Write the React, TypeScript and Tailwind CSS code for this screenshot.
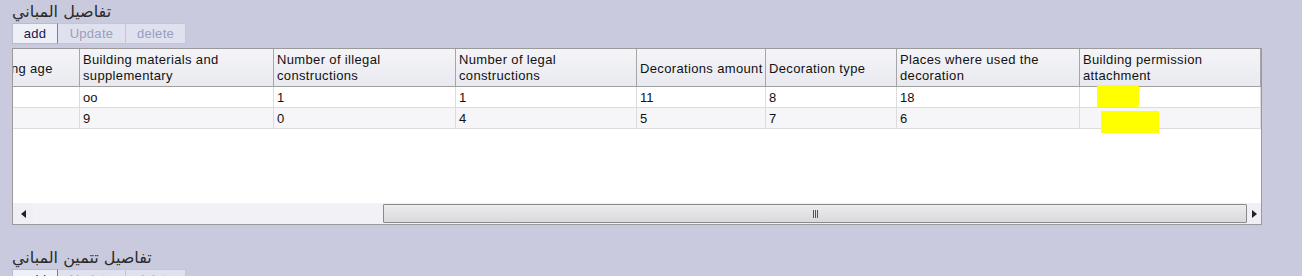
import React from 'react';

const columns = [
  { label: 'Building age', w: 'w-[102px] min-w-[102px]' },
  { label: 'Building materials and\nsupplementary', w: 'w-[194px] min-w-[194px]' },
  { label: 'Number of illegal\nconstructions', w: 'w-[182px] min-w-[182px]' },
  { label: 'Number of legal\nconstructions', w: 'w-[181px] min-w-[181px]' },
  { label: 'Decorations amount', w: 'w-[129px] min-w-[129px]' },
  { label: 'Decoration type', w: 'w-[131px] min-w-[131px]' },
  { label: 'Places where used the\ndecoration', w: 'w-[183px] min-w-[183px]' },
  { label: 'Building permission\nattachment', w: 'w-[181px] min-w-[181px]' },
];

const rows = [
  ['', 'oo', '1', '1', '11', '8', '18', ''],
  ['', '9', '0', '4', '5', '7', '6', ''],
];

const Toolbar = () => (
  <div className="flex h-[21px] text-[13px] leading-[19px] tracking-[0.3px]">
    <button className="w-[46px] border border-[#b9bccd] border-r-[#7d7f8c] bg-[#eef0f8] text-[#14184a]">add</button>
    <button className="w-[68px] border border-l-0 border-[#c4c6d6] bg-[#dfe1ee] text-[#9a9ebd]">Update</button>
    <button className="w-[60px] border border-l-0 border-[#c4c6d6] bg-[#dfe1ee] text-[#9a9ebd]">delete</button>
  </div>
);

const App: React.FC = () => {
  return (
    <div
      className="h-[276px] w-[1302px] overflow-hidden bg-[#c9cadd] pl-[12px] text-[#111]"
      style={{ fontFamily: '"Liberation Sans", Arial, sans-serif' }}
    >
      <div
        className="h-[23px] pt-[2px] text-[16px] leading-[19px] text-[#2a2a2a]"
        dir="rtl"
        style={{ fontFamily: '"DejaVu Sans", "Noto Sans", sans-serif', textAlign: 'left' }}
      >
        <span className="inline-block">تفاصيل المباني</span>
      </div>
      <Toolbar />

      {/* grid */}
      <div className="mt-[4px] flex h-[177px] w-[1250px] flex-col border border-[#9a9a9a] bg-white">
        <div className="relative flex-1 overflow-hidden">
          <div className="ml-[-35px] flex flex-col">
            <div className="flex h-[38px] border-b border-[#a0a0a0] bg-gradient-to-b from-[#f4f4f8] to-[#e9eaf0]">
              {columns.map((c, idx) => (
                <div
                  key={c.label}
                  className={`${c.w} overflow-hidden whitespace-pre border-r border-[#a6a6a6] px-[3px] pt-[3px] text-[13px] leading-[16px] tracking-[0.35px] text-[#111]`}
                >
                  {c.label.includes('\n') ? (
                    c.label
                  ) : (
                    <div className={idx === 0 ? 'ml-[-4px] pt-[9px]' : 'pt-[9px]'}>{c.label}</div>
                  )}
                </div>
              ))}
            </div>
            {rows.map((r, i) => (
              <div
                key={i}
                className={`flex h-[21px] border-b border-[#dcdcdc] ${i === 1 ? 'bg-[#f6f6f8]' : 'bg-white'}`}
              >
                {r.map((v, j) => (
                  <div
                    key={j}
                    className={`${columns[j].w} border-r border-[#dcdcdc] px-[3px] pt-[3px] text-[13px] leading-[16px] text-[#111]`}
                  >
                    {v}
                  </div>
                ))}
              </div>
            ))}
          </div>
          {/* yellow highlight marks */}
          <div className="absolute left-[1084px] top-[36px] h-[22px] w-[42px] rounded-br-[2px] bg-[#ffff00]" />
          <div className="absolute left-[1088px] top-[62px] h-[22px] w-[58px] bg-[#ffff00]" />
        </div>

        {/* horizontal scrollbar */}
        <div className="flex h-[21px] items-center bg-[#f0f0f4]">
          <div className="flex w-[20px] justify-center">
            <svg width="5" height="8" viewBox="0 0 5 8">
              <path d="M5 0 L0 4 L5 8 Z" fill="#222" />
            </svg>
          </div>
          <div className="h-full flex-[0_0_350px] bg-[#f2f2f6]" />
          <div className="flex h-[19px] w-[864px] items-center justify-center rounded-[1px] border border-[#8a8a8a] bg-gradient-to-b from-[#ececee] to-[#d9d9dc]">
            <div className="flex gap-[1px]">
              <div className="h-[8px] w-[1px] bg-[#555]" />
              <div className="h-[8px] w-[1px] bg-[#555]" />
              <div className="h-[8px] w-[1px] bg-[#555]" />
            </div>
          </div>
          <div className="flex flex-1 justify-center">
            <svg width="5" height="8" viewBox="0 0 5 8">
              <path d="M0 0 L5 4 L0 8 Z" fill="#222" />
            </svg>
          </div>
        </div>
      </div>

      <div
        className="mt-[23px] h-[21px] text-[16px] leading-[19px] text-[#2a2a2a]"
        dir="rtl"
        style={{ fontFamily: '"DejaVu Sans", "Noto Sans", sans-serif', textAlign: 'left' }}
      >
        <span className="inline-block">تفاصيل تتمين المباني</span>
      </div>
      <Toolbar />
    </div>
  );
};

export default App;
